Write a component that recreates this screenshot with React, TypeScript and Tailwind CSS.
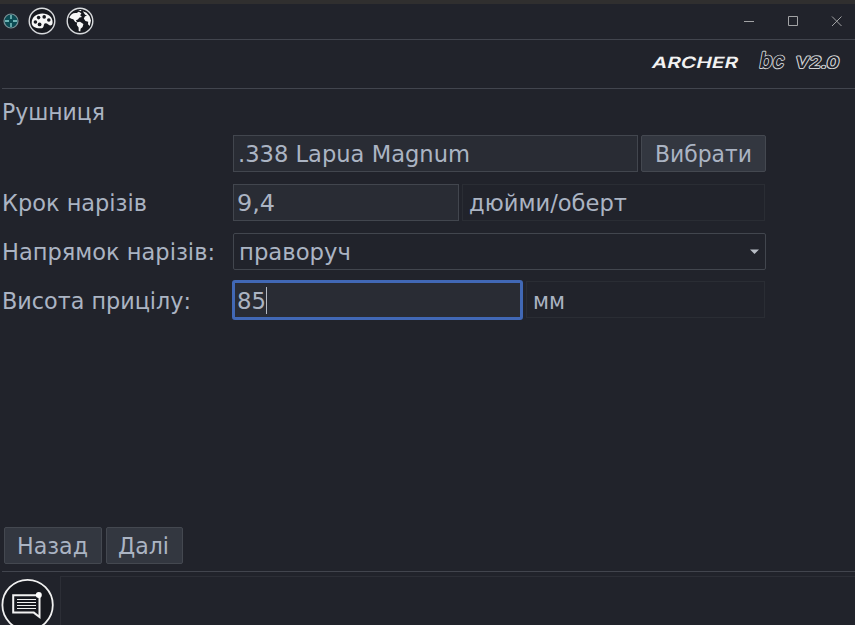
import React from "react";

const box = "flex h-[37px] items-center whitespace-pre border";
const field = `${box} border-[#42464e] bg-[#292c34]`;
const unit = `${box} border-[#2a2d34] bg-[#21232b]`;
const button = `${box} justify-center rounded-[2px] border-[#444850] bg-[#333740]`;

function Txt({ children, width, dy = 0 }: { children: string; width: number; dy?: number }) {
  return (
    <svg width={width} height="36" className="block shrink-0 overflow-visible" fill="currentColor">
      <text x="0" y={26.5 + dy} textLength={width} lengthAdjust="spacingAndGlyphs" fontSize="23">
        {children}
      </text>
    </svg>
  );
}

function Label({ text, width, dy = 0 }: { text: string; width: number; dy?: number }) {
  return (
    <div className="w-[233px] shrink-0 pl-[2px]">
      {text && <Txt width={width} dy={dy}>{text}</Txt>}
    </div>
  );
}

function TitleBar() {
  return (
    <header className="flex h-[36px] shrink-0 items-center pb-[3px]">
      <svg width="18" height="18" viewBox="0 0 18 18" className="ml-[2px]" fill="none">
        <circle cx="9" cy="9" r="7" fill="#0c4c54" stroke="#789096" strokeWidth="1.2" />
        <path d="M9 3v4M9 11v4M3 9h4M11 9h4" stroke="#8fd6d3" strokeWidth="1.3" />
      </svg>
      <svg width="28" height="28" viewBox="0 0 28 28" className="ml-[8px]">
        <circle cx="14" cy="14" r="12.8" fill="#17191f" stroke="#d8dadd" strokeWidth="1.4" />
        <path d="M3.7 16C3.7 10 8.5 6.5 14.5 6.5C20.5 6.5 24.8 10 24.6 15.5C24.5 18.5 22.3 19.2 20.3 17.5C18.5 15.8 16.6 15.8 16 17.4C15.4 19.4 15.8 21 12.8 21.2C8 21.5 3.8 19.7 3.7 16Z" fill="#f6f6f6" />
        <g fill="#17191f">
          <circle cx="7.4" cy="15" r="1.8" /><circle cx="10.6" cy="10.6" r="1.8" /><circle cx="16.2" cy="9.9" r="1.8" /><circle cx="20.8" cy="13" r="1.8" /><circle cx="11.6" cy="17.4" r="1.9" />
        </g>
      </svg>
      <svg width="28" height="28" viewBox="0 0 28 28" className="ml-[10px]">
        <circle cx="14" cy="14" r="12.8" fill="#17191f" stroke="#d8dadd" strokeWidth="1.4" />
        <g fill="#f6f6f6">
          <path d="M3.2 10.5C4.8 7 7.2 5.4 10.7 6L12.8 4.8L15.4 6.3L14.2 8.3L16 10L13.5 10.5L11.8 12.4L9.9 13.3L11.3 15.4L9.2 15L7.3 12.2L5.3 11.7Z" />
          <path d="M11.1 15.3L14 14.7L17.4 17L16.6 20L14.6 21.8L14.3 24.6L12.7 23.9L12.6 20.4L10.8 18Z" />
          <path d="M16.8 4.2L20.5 5.7L23.6 9.3L25 13.5L23.7 19L22 17.2L22.2 14.7L19.4 13.9L17.8 11.6L19 9.3L21 8.7L19.1 7.7Z" />
          <path d="M12.2 3.1L15.3 2.9L15 4.3Z" />
        </g>
      </svg>
      <svg width="112" height="20" viewBox="0 0 112 20" className="ml-auto shrink-0" fill="none" stroke="#a2a3a5">
        <path d="M1 10.5H11M45.5 5.5h9v9h-9zM89 5.5L98.5 15M98.5 5.5L89 15" />
      </svg>
    </header>
  );
}

function Brand() {
  return (
    <div className="flex h-[48px] justify-end">
      <svg width="215" height="48" viewBox="640 40 215 48" fontFamily="Inter, sans-serif">
        <g transform="translate(651 68.4) skewX(-14)">
          <text x="0" y="0" fontSize="15.5" fontWeight="600" fill="#f2f2f2" textLength="86" lengthAdjust="spacingAndGlyphs">ARCHER</text>
        </g>
        <g transform="translate(758.5 68.4) skewX(-10)" fill="#21232b" stroke="#d2d3d5" strokeWidth="1.9" strokeLinejoin="bevel" paintOrder="stroke" fontWeight="600">
          <text x="0" y="0" fontSize="22.5" textLength="25" lengthAdjust="spacingAndGlyphs">bc</text>
          <text x="36" y="0" fontSize="16" textLength="44" lengthAdjust="spacingAndGlyphs">V2.0</text>
        </g>
      </svg>
    </div>
  );
}

export default function App() {
  return (
    <div className="flex h-[625px] w-[855px] flex-col overflow-hidden bg-[#21232b] font-['DejaVu_Sans',sans-serif] text-[23px] text-[#abb4c3]">
      <div className="h-[4px] shrink-0 bg-[#302f2f]" />
      <TitleBar />
      <div className="mt-[-1px] h-[1px] shrink-0 bg-[#42454e]" />
      <Brand />
      <div className="ml-[2px] h-[1px] shrink-0 bg-[#42454e]" />
      <main className="flex h-[475px] shrink-0 flex-col pt-[4px]">
        <div className="h-[42px] pl-[2px]"><Txt width={103}>Рушниця</Txt></div>
        <div className="flex h-[49px]">
          <Label text="" width={0} />
          <div className={`${field} w-[405px] pl-[4px]`}><Txt width={232} dy={-0.5}>.338 Lapua Magnum</Txt></div>
          <button className={`${button} ml-[3px] w-[125px]`}><Txt width={97} dy={-0.5}>Вибрати</Txt></button>
        </div>
        <div className="flex h-[49px]">
          <Label text="Крок нарізів" width={145} />
          <div className={`${field} w-[226px] pl-[3px]`}><Txt width={38} dy={-0.5}>9,4</Txt></div>
          <div className={`${unit} ml-[3px] w-[303px] pl-[6px]`}><Txt width={158} dy={-0.5}>дюйми/оберт</Txt></div>
        </div>
        <div className="flex h-[48px]">
          <Label text="Напрямок нарізів:" width={213} />
          <div className={`${box} w-[533px] justify-between rounded-[2px] border-[#42464e] pl-[5px] pr-[6px]`}>
            <Txt width={112} dy={-0.5}>праворуч</Txt>
            <svg width="9" height="6" className="mt-[1px]"><path d="M0 .5H9L4.5 5Z" fill="#b8bdc5" /></svg>
          </div>
        </div>
        <div className="flex h-[49px]">
          <Label text="Висота прицілу:" width={189} dy={1} />
          <div className="-ml-[1px] -mt-[1px] flex h-[40px] w-[291px] items-center rounded-[3px] border-[3px] border-[#4168b5] bg-[#292c34] pl-[2px]">
            <Txt width={29}>85</Txt>
            <span className="h-[27px] w-[1px] bg-[#b5bac4]" />
          </div>
          <div className={`${unit} ml-[3px] w-[239px] pl-[6px]`}><Txt width={32}>мм</Txt></div>
        </div>
        <div className="mt-auto flex gap-[4px] pl-[4px]">
          <button className={`${button} w-[98px] pr-[2px]`}><Txt width={71} dy={-0.5}>Назад</Txt></button>
          <button className={`${button} w-[77px] pr-[2px]`}><Txt width={51} dy={-0.5}>Далі</Txt></button>
        </div>
      </main>
      <div className="ml-[2px] mt-[7px] h-[1px] shrink-0 bg-[#42454e]" />
      <footer className="flex flex-1 pt-[4px]">
        <svg width="60" height="49" viewBox="0 576 60 49" fill="none" stroke="#f1f1f1" className="shrink-0">
          <circle cx="27.6" cy="605" r="25.2" strokeWidth="1.8" fill="#17191f" />
          <path d="M13.2 595.3H39.5V617L33.8 612.6H13.2Z" strokeWidth="2" />
          <path d="M17 599.5H36M17 602.5H36M17 605.5H36M17 608.5H36" strokeWidth="1" />
          <circle cx="38.8" cy="595" r="3" fill="#fff" stroke="none" />
        </svg>
        <div className="flex-1 border-l border-t border-[#2c2e36]" />
      </footer>
    </div>
  );
}
